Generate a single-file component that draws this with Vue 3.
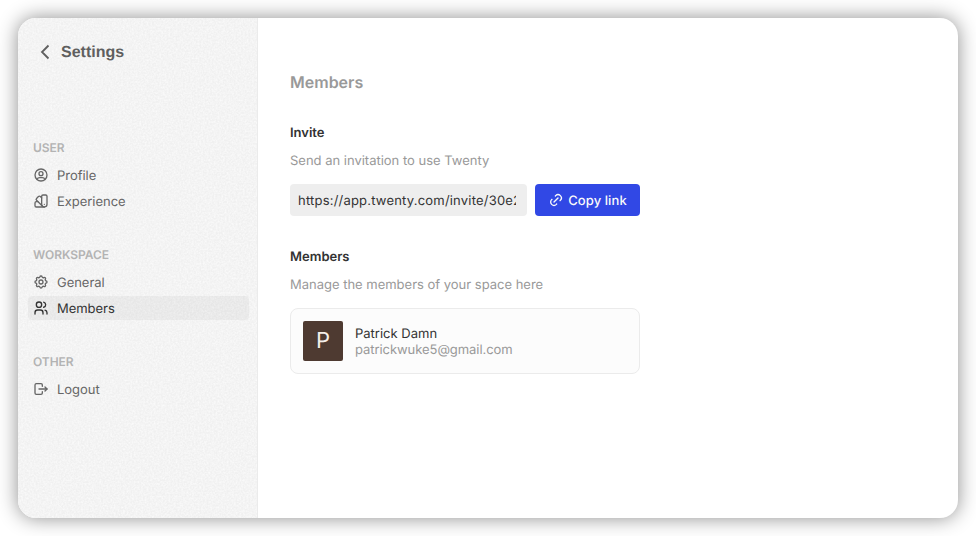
<script setup>
const groups = [
  {
    title: 'User',
    items: [
      {
        label: 'Profile',
        paths: [
          'M12 12m-9 0a9 9 0 1 0 18 0a9 9 0 1 0 -18 0',
          'M12 10m-3 0a3 3 0 1 0 6 0a3 3 0 1 0 -6 0',
          'M6.168 18.849a4 4 0 0 1 3.832 -2.849h4a4 4 0 0 1 3.834 2.855',
        ],
      },
      {
        label: 'Experience',
        paths: [
          'M19 3h-4a2 2 0 0 0 -2 2v12a4 4 0 0 0 8 0v-12a2 2 0 0 0 -2 -2',
          'M13 7.35l-2 -2a2 2 0 0 0 -2.828 0l-2.828 2.828a2 2 0 0 0 0 2.828l9 9',
          'M7.3 13h-2.3a2 2 0 0 0 -2 2v4a2 2 0 0 0 2 2h12',
          'M17 17l0 .01',
        ],
      },
    ],
  },
  {
    title: 'Workspace',
    items: [
      {
        label: 'General',
        paths: [
          'M10.325 4.317c.426 -1.756 2.924 -1.756 3.35 0a1.724 1.724 0 0 0 2.573 1.066c1.543 -.94 3.31 .826 2.37 2.37a1.724 1.724 0 0 0 1.065 2.572c1.756 .426 1.756 2.924 0 3.35a1.724 1.724 0 0 0 -1.066 2.573c.94 1.543 -.826 3.31 -2.37 2.37a1.724 1.724 0 0 0 -2.572 1.065c-.426 1.756 -2.924 1.756 -3.35 0a1.724 1.724 0 0 0 -2.573 -1.066c-1.543 .94 -3.31 -.826 -2.37 -2.37a1.724 1.724 0 0 0 -1.065 -2.572c-1.756 -.426 -1.756 -2.924 0 -3.35a1.724 1.724 0 0 0 1.066 -2.573c-.94 -1.543 .826 -3.31 2.37 -2.37c1 .608 2.296 .07 2.572 -1.065',
          'M12 12m-3 0a3 3 0 1 0 6 0a3 3 0 1 0 -6 0',
        ],
      },
      {
        label: 'Members',
        active: true,
        paths: [
          'M9 7m-4 0a4 4 0 1 0 8 0a4 4 0 1 0 -8 0',
          'M3 21v-2a4 4 0 0 1 4 -4h4a4 4 0 0 1 4 4v2',
          'M16 3.13a4 4 0 0 1 0 7.75',
          'M21 21v-2a4 4 0 0 0 -3 -3.85',
        ],
      },
    ],
  },
  {
    title: 'Other',
    items: [
      {
        label: 'Logout',
        paths: [
          'M14 8v-2a2 2 0 0 0 -2 -2h-7a2 2 0 0 0 -2 2v12a2 2 0 0 0 2 2h7a2 2 0 0 0 2 -2v-2',
          'M9 12h12l-3 -3',
          'M18 15l3 -3',
        ],
      },
    ],
  },
]
</script>

<template>
  <div class="page">
    <div class="window">
      <aside class="sidebar">
        <svg class="grain" aria-hidden="true">
          <filter id="grain">
            <feTurbulence type="fractalNoise" baseFrequency="0.55" numOctaves="2" seed="4" />
            <feColorMatrix values="0 0 0 0 1  0 0 0 0 1  0 0 0 0 1  1.2 0 0 0 -0.35" />
          </filter>
          <rect width="100%" height="100%" filter="url(#grain)" />
        </svg>
        <a class="back">
          <svg class="chevron" viewBox="0 0 10 16"><path d="M8.5 1.5L2 8l6.5 6.5" /></svg>
          <span class="back-label">Settings</span>
        </a>
        <nav class="nav">
          <section v-for="group in groups" :key="group.title" class="group">
            <h3 class="group-title">{{ group.title }}</h3>
            <a
              v-for="item in group.items"
              :key="item.label"
              class="item"
              :class="{ active: item.active }"
            >
              <svg class="icon" viewBox="0 0 24 24">
                <path v-for="d in item.paths" :key="d" :d="d" />
              </svg>
              <span class="label">{{ item.label }}</span>
            </a>
          </section>
        </nav>
      </aside>
      <main class="content">
        <h1 class="title">Members</h1>
        <section class="section">
          <h2 class="heading">Invite</h2>
          <p class="description">Send an invitation to use Twenty</p>
          <div class="invite">
            <div class="field"><span class="url">https://app.twenty.com/invite/30e2</span></div>
            <button class="copy">
              <svg class="icon" viewBox="0 0 24 24">
                <path d="M9 15l6 -6" />
                <path d="M11 6l.463 -.536a5 5 0 0 1 7.071 7.072l-.534 .464" />
                <path d="M13 18l-.397 .534a5.068 5.068 0 0 1 -7.127 0a4.972 4.972 0 0 1 0 -7.071l.524 -.463" />
              </svg>
              <span class="label">Copy link</span>
            </button>
          </div>
        </section>
        <section class="section">
          <h2 class="heading">Members</h2>
          <p class="description">Manage the members of your space here</p>
          <div class="card">
            <div class="avatar">P</div>
            <div class="person">
              <span class="name">Patrick Damn</span>
              <span class="email">patrickwuke5@gmail.com</span>
            </div>
          </div>
        </section>
      </main>
    </div>
  </div>
</template>

<style>
body {
  background: #fff;
  overflow: hidden;
}
</style>

<style scoped>
.page {
  box-sizing: border-box;
  width: 976px;
  height: 536px;
  padding: 18px;
  font-family: Inter, "Liberation Sans", sans-serif;
  font-size: 13px;
  text-rendering: geometricPrecision;
}
.window {
  display: flex;
  width: 940px;
  height: 500px;
  border-radius: 18px;
  overflow: hidden;
  background: #fff;
  box-shadow: 0 0 20px rgba(0, 0, 0, 0.45);
}
.sidebar {
  position: relative;
  box-sizing: border-box;
  flex: none;
  width: 240px;
  padding: 24px 8px 0 10px;
  background: #f0f0f0;
  border-right: 1px solid #ebebeb;
}
.grain {
  position: absolute;
  inset: 0;
  width: 100%;
  height: 100%;
}
.back {
  position: relative;
  display: flex;
  align-items: center;
  gap: 11px;
  height: 20px;
  padding-left: 12px;
  color: #5f5f5f;
  font: bold 16px "Liberation Sans", Arial, sans-serif;
}
.back-label {
  line-height: 18px;
  padding-top: 2px;
}
.chevron {
  width: 10px;
  height: 16px;
  fill: none;
  stroke: currentColor;
  stroke-width: 1.8;
}
.nav {
  position: relative;
  display: flex;
  flex-direction: column;
  gap: 34px;
  margin-top: 78px;
}
.group {
  display: flex;
  flex-direction: column;
  gap: 2px;
}
.group-title {
  margin: 0 0 5px;
  padding: 0 5px;
  height: 16px;
  line-height: 16px;
  font-size: 12px;
  font-weight: 600;
  letter-spacing: -0.05px;
  text-transform: uppercase;
  color: #b3b3b3;
}
.item {
  display: flex;
  align-items: center;
  gap: 8px;
  height: 24px;
  padding: 0 5px;
  border-radius: 4px;
  color: #666;
}
.item.active {
  background: rgba(0, 0, 0, 0.04);
  color: #333;
}
.label {
  line-height: 16px;
  padding-top: 2px;
}
.item .label {
  letter-spacing: -0.04px;
}
.icon {
  flex: none;
  width: 16px;
  height: 16px;
  fill: none;
  stroke: currentColor;
  stroke-width: 2;
  stroke-linecap: round;
  stroke-linejoin: round;
}
.content {
  flex: 1;
  padding: 54px 32px 0;
}
.title {
  margin: 0 0 33px;
  line-height: 20px;
  font-size: 16px;
  font-weight: 600;
  color: #999;
}
.section {
  width: 350px;
  margin-bottom: 33px;
}
.heading {
  margin: 0 0 12px;
  line-height: 16px;
  font-size: 13px;
  font-weight: 600;
  color: #333;
}
.description {
  margin: 0 0 15px;
  line-height: 16px;
  letter-spacing: -0.01px;
  color: #999;
}
.invite {
  display: flex;
  gap: 8px;
}
.field {
  box-sizing: border-box;
  width: 237px;
  height: 32px;
  padding: 1px 11px 0 8px;
  border-radius: 4px;
  background: #eee;
  color: #333;
  line-height: 32px;
}
.url {
  display: block;
  height: 31px;
  overflow: hidden;
  white-space: nowrap;
  letter-spacing: 0.2px;
}
.copy {
  display: flex;
  align-items: center;
  justify-content: center;
  gap: 4px;
  width: 105px;
  height: 32px;
  padding: 0;
  border: 0;
  border-radius: 4px;
  background: #3148e5;
  color: #fafafa;
  font: 500 13px Inter, sans-serif;
  letter-spacing: 0.08px;
  text-rendering: geometricPrecision;
}
.card {
  box-sizing: border-box;
  display: flex;
  align-items: center;
  gap: 12px;
  height: 66px;
  padding: 0 12px;
  border: 1px solid #ebebeb;
  border-radius: 8px;
  background: #fcfcfc;
}
.avatar {
  display: flex;
  align-items: center;
  justify-content: center;
  width: 40px;
  height: 40px;
  border-radius: 2px;
  background: #4e3a31;
  color: #f4eee9;
  font-size: 22px;
  font-weight: 400;
}
.person {
  display: flex;
  flex-direction: column;
  padding-top: 2px;
  line-height: 16px;
}
.name {
  color: #333;
}
.email {
  letter-spacing: -0.06px;
  color: #999;
}
</style>
